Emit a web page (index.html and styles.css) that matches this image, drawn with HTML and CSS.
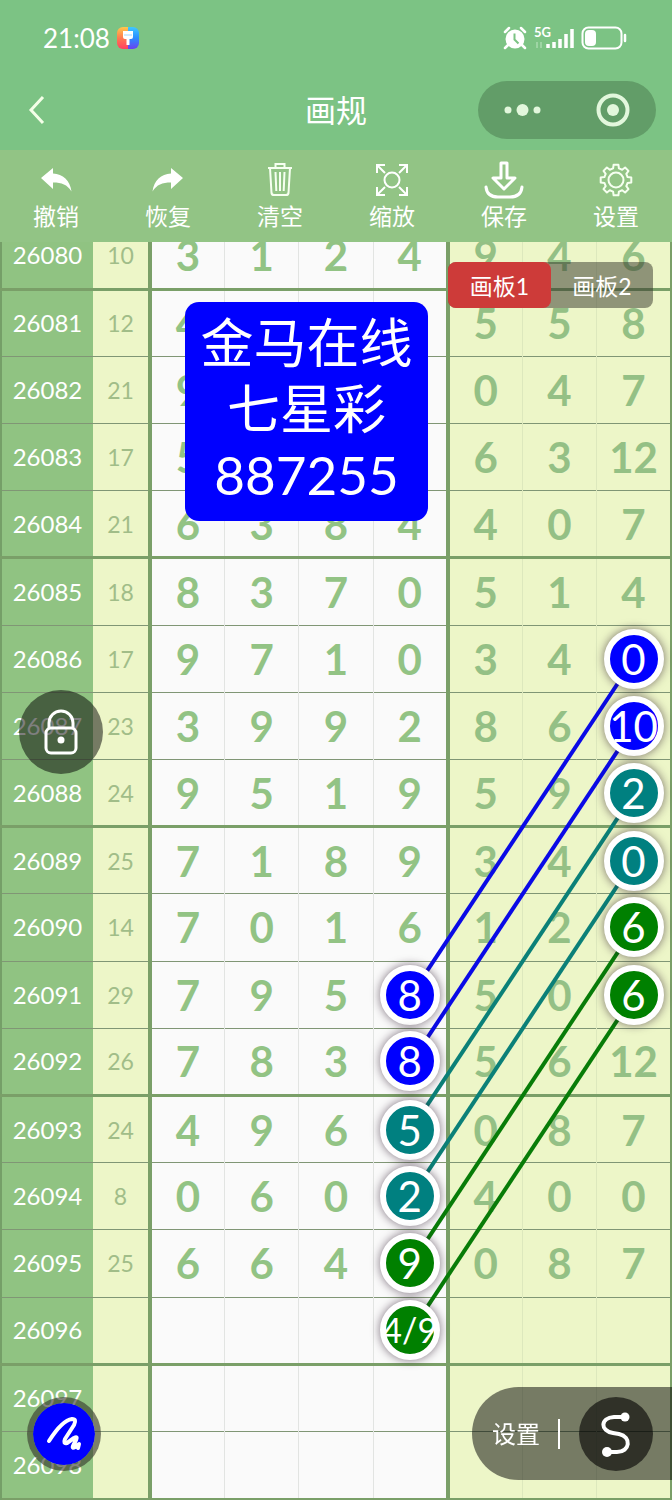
FILE: index.html
```html
<!DOCTYPE html>
<html lang="zh-CN">
<head>
    <meta charset="UTF-8">
    <meta name="viewport" content="width=device-width, initial-scale=1.0">
    <title>画规</title>
    <link rel="stylesheet" href="styles.css">
</head>
<body>
    <header class="header">
        <div class="status-bar">
            <div class="status-left">
                <span class="time">21:08</span>
                <svg class="theme-icon" width="22" height="22" viewBox="0 0 22 22">
                    <defs>
                        <linearGradient id="warm" x1="0" y1="0" x2="0" y2="1">
                            <stop offset="0" stop-color="#ffc84a"/>
                            <stop offset="0.5" stop-color="#ff7a50"/>
                            <stop offset="1" stop-color="#ff3f62"/>
                        </linearGradient>
                        <linearGradient id="cool" x1="0" y1="0" x2="0" y2="1">
                            <stop offset="0" stop-color="#3fc8ff"/>
                            <stop offset="0.5" stop-color="#2b8cff"/>
                            <stop offset="1" stop-color="#6a40f0"/>
                        </linearGradient>
                    </defs>
                    <path d="M6 0h6v22H6a6 6 0 0 1-6-6V6a6 6 0 0 1 6-6z" fill="url(#warm)"/>
                    <path d="M11 0h5a6 6 0 0 1 6 6v10a6 6 0 0 1-6 6h-5z" fill="url(#cool)"/>
                    <path d="M6 4h10v6q0 2-2 2h-1.500v6h-3v-6H8q-2 0-2-2z" fill="#fff"/>
                    <path d="M7 8h8" stroke="#9fd8ff" stroke-width="1"/>
                </svg>
            </div>
            <div class="status-right">
                <svg width="24" height="24" viewBox="0 0 24 24">
                    <circle cx="12" cy="13" r="9.500" fill="#fff"/>
                    <path d="M2 6l4-4M22 6l-4-4M5 19l-3 3M19 19l3 3" stroke="#fff" stroke-width="2.500" stroke-linecap="round"/>
                    <path d="M11.500 7.500v6l4 4" fill="none" stroke="#7cc384" stroke-width="2"/>
                </svg>
                <div class="signal">
                    <span class="network">5G</span>
                    <svg width="40" height="24" viewBox="0 0 40 24">
                        <path d="M3 16v6M7 16v6" stroke="#a9dcae" stroke-width="1.500"/>
                        <path d="M14 18v4M20 16v6M26 13v9M32 8v14M38 3v19" stroke="#fff" stroke-width="3.500"/>
                    </svg>
                </div>
                <svg width="46" height="24" viewBox="0 0 46 24">
                    <rect x="1.500" y="1.500" width="39" height="21" rx="6" fill="none" stroke="#fff" stroke-width="2"/>
                    <rect x="4" y="4" width="11" height="16" rx="4" fill="#fff"/>
                    <path d="M44 9v6" stroke="#fff" stroke-width="2.500" stroke-linecap="round"/>
                </svg>
            </div>
        </div>
        <div class="nav-bar">
            <button class="back" aria-label="返回">
                <svg width="18" height="30" viewBox="0 0 18 30"><path d="M15 2L3 15l12 13" fill="none" stroke="#f4ffe8" stroke-width="3"/></svg>
            </button>
            <h1 class="title">画规</h1>
            <div class="capsule">
                <button aria-label="更多">
                    <svg width="38" height="14" viewBox="0 0 38 14" fill="#e2f7dc"><circle cx="4" cy="7" r="3.500"/><circle cx="18.500" cy="7" r="6"/><circle cx="33" cy="7" r="3.500"/></svg>
                </button>
                <button aria-label="关闭">
                    <svg width="34" height="34" viewBox="0 0 34 34"><circle cx="17" cy="17" r="14.500" fill="none" stroke="#e2f7dc" stroke-width="4"/><circle cx="17" cy="17" r="6" fill="#e2f7dc"/></svg>
                </button>
            </div>
        </div>
    </header>

    <nav class="toolbar">
        <button>
            <svg width="40" height="40" viewBox="0 0 40 40"><path d="M5 18L17 8v5.500c10 .5 17 7 18.500 18C31 24.500 26 22.500 17 22.500V29z" fill="#fff"/></svg>
            撤销
        </button>
        <button>
            <svg width="40" height="40" viewBox="0 0 40 40"><path d="M35 18L23 8v5.500c-10 .5-17 7-18.500 18C9 24.500 14 22.500 23 22.500V29z" fill="#fff"/></svg>
            恢复
        </button>
        <button>
            <svg width="40" height="40" viewBox="0 0 40 40" fill="none" stroke="#f6fff0" stroke-width="2"><path d="M8 8h24M15.500 8V4h9v4M10 8l1.500 25q.3 2 2.500 2h12q2.200 0 2.500-2L30 8M15.500 12l.8 19M20 12v19M24.500 12l-.8 19"/></svg>
            清空
        </button>
        <button>
            <svg width="40" height="40" viewBox="0 0 40 40" fill="none" stroke="#fff" stroke-width="2"><circle cx="20" cy="20" r="7.500"/><path d="M5 13V5h8M5 5l8 8M27 5h8v8M35 5l-8 8M5 27v8h8M5 35l8-8M35 27v8h-8M35 35l-8-8"/></svg>
            缩放
        </button>
        <button>
            <svg width="40" height="40" viewBox="0 0 40 40" fill="none" stroke="#fff" stroke-width="3" stroke-linejoin="round" stroke-linecap="round"><path d="M17 3h6v15h8L20 29 9 18h8zM2 27q1 10 12 10h12q11 0 12-10"/></svg>
            保存
        </button>
        <button>
            <svg id="gear" width="40" height="40" viewBox="0 0 40 40" fill="none" stroke="#f6fff0" stroke-width="2" stroke-linejoin="round"><path/><circle cx="20" cy="20" r="7.500"/></svg>
            设置
        </button>
    </nav>

    <main class="board">
        <div class="sheet">
            <table class="trend">
                <colgroup>
                    <col class="col-issue">
                    <col class="col-sum">
                    <col span="7">
                </colgroup>
                <tbody id="rows"></tbody>
            </table>
            <svg class="links" id="links" viewBox="0 0 672 1277" preserveAspectRatio="none"></svg>
        </div>
        <div class="note">金马在线<br>七星彩<br>887255</div>
        <div class="tabs">
            <button class="tab active">画板1</button>
            <button class="tab">画板2</button>
        </div>
    </main>

    <button class="lock" aria-label="锁定">
        <svg width="34" height="46" viewBox="0 0 34 46" fill="none" stroke="#fff" stroke-width="3">
            <rect x="2" y="19" width="30" height="25" rx="5"/>
            <path d="M5 19v-5a12 12 0 0 1 24 0v5"/>
            <circle cx="17" cy="31" r="3.500" fill="#fff" stroke="none"/>
        </svg>
    </button>

    <button class="brush" aria-label="画笔">
        <svg width="38" height="38" viewBox="0 0 38 38" fill="none" stroke="#fff" stroke-width="4" stroke-linecap="round" stroke-linejoin="round">
            <path d="M4 26C11 15 20 5 27 4q5 0 2 6l-9 14q-2 5 2 4l7-5q4-2 2 2l-3 6q-1 3 2 1l4-3-1 4"/>
        </svg>
    </button>

    <div class="panel">
        <button class="panel-text">设置</button>
        <button class="curve" aria-label="曲线">
            <svg width="34" height="48" viewBox="0 0 34 48">
                <path d="M26 7H15C1 8 1 21 14 23l6 1c13 3 11 18-2 18H8" fill="none" stroke="#fff" stroke-width="4"/>
                <circle cx="26" cy="7" r="4.500" fill="#fff"/>
                <circle cx="8" cy="42" r="5" fill="#fff"/>
            </svg>
        </button>
    </div>

    <script>
        // 期号, 和值, 号码
        const rows = [
            [26080, 10, [3, 1, 2, 4, 9, 4, 6]],
            [26081, 12, [4, '', '', '', 5, 5, 8]],
            [26082, 21, [9, '', '', '', 0, 4, 7]],
            [26083, 17, [5, '', '', '', 6, 3, 12]],
            [26084, 21, [6, 3, 8, 4, 4, 0, 7]],
            [26085, 18, [8, 3, 7, 0, 5, 1, 4]],
            [26086, 17, [9, 7, 1, 0, 3, 4, 0]],
            [26087, 23, [3, 9, 9, 2, 8, 6, 10]],
            [26088, 24, [9, 5, 1, 9, 5, 9, 2]],
            [26089, 25, [7, 1, 8, 9, 3, 4, 0]],
            [26090, 14, [7, 0, 1, 6, 1, 2, 6]],
            [26091, 29, [7, 9, 5, 8, 5, 0, 6]],
            [26092, 26, [7, 8, 3, 8, 5, 6, 12]],
            [26093, 24, [4, 9, 6, 5, 0, 8, 7]],
            [26094, 8, [0, 6, 0, 2, 4, 0, 0]],
            [26095, 25, [6, 6, 4, 9, 0, 8, 7]],
            [26096, '', ['', '', '', '4/9', '', '', '']],
            [26097, '', ['', '', '', '', '', '', '']],
            [26098, '', ['', '', '', '', '', '', '']]
        ];

        // 连线: 第7位的期号 -> 第4位的期号
        const links = [
            { from: 26086, to: 26091, color: 'blue' },
            { from: 26087, to: 26092, color: 'blue' },
            { from: 26088, to: 26093, color: 'teal' },
            { from: 26089, to: 26094, color: 'teal' },
            { from: 26090, to: 26095, color: 'green' },
            { from: 26091, to: 26096, color: 'green' }
        ];

        const balls = {};
        links.forEach(l => {
            balls[l.from + '-6'] = l.color;
            balls[l.to + '-3'] = l.color;
        });

        document.getElementById('rows').innerHTML = rows.map(([issue, sum, nums]) => {
            const cells = nums.map((n, i) => {
                const color = balls[issue + '-' + i];
                const small = String(n).length > 2 ? ' small' : '';
                const text = color ? `<span class="ball ${color}${small}">${n}</span>` : n;
                return `<td class="${i < 4 ? 'front' : 'back-area'}">${text}</td>`;
            }).join('');
            return `<tr><th scope="row">${issue}</th><td class="sum">${sum}</td>${cells}</tr>`;
        }).join('');

        const rowY = issue => 33.6 + (issue - 26080) * 67.2;
        document.getElementById('links').innerHTML = links.map(l =>
            `<line class="${l.color}" x1="634" y1="${rowY(l.from)}" x2="411" y2="${rowY(l.to)}"/>`
        ).join('');

        // 齿轮轮廓, 8个齿
        let d = '';
        for (let i = 0; i < 8; i++) {
            [[-14, 12], [-9, 15.5], [9, 15.5], [14, 12]].forEach(([a, r]) => {
                const t = (i * 45 + a) * Math.PI / 180;
                const x = 20 + Math.sin(t) * r;
                const y = 20 - Math.cos(t) * r;
                d += (d ? 'L' : 'M') + x.toFixed(1) + ' ' + y.toFixed(1);
            });
        }
        document.querySelector('#gear path').setAttribute('d', d + 'z');
    </script>
</body>
</html>
```

FILE: styles.css
```css
* {
    box-sizing: border-box;
}

body {
    margin: 0;
    min-height: 100vh;
    background: #fafafa;
    font-family: Lato, "Noto Sans CJK SC", sans-serif;
    color: #fff;
    overflow-x: hidden;
}

button {
    padding: 0;
    border: 0;
    background: none;
    color: inherit;
    font: inherit;
    cursor: pointer;
}

svg {
    display: block;
}

/* 顶部 */
.header {
    padding-bottom: 6px;
    background: #7cc384;
}

.status-bar {
    display: flex;
    justify-content: space-between;
    align-items: center;
    height: 76px;
    padding: 0 45px 0 43px;
}

.status-left,
.status-right {
    display: flex;
    align-items: center;
    gap: 7px;
}

.time {
    font-size: 26px;
}

.signal {
    position: relative;
}

.network {
    position: absolute;
    left: 0;
    top: 0;
    font-size: 13px;
    font-weight: 700;
    line-height: 13px;
}

.nav-bar {
    display: grid;
    grid-template-columns: 1fr auto 1fr;
    align-items: center;
    height: 68px;
    padding: 0 16px 0 28px;
}

.title {
    margin: 0;
    padding-right: 12px;
    font-size: 31px;
    font-weight: 400;
    line-height: 40px;
}

.back {
    justify-self: start;
}

.capsule {
    justify-self: end;
    display: flex;
    justify-content: space-between;
    align-items: center;
    width: 178px;
    height: 58px;
    padding: 0 26px;
    border-radius: 29px;
    background: #629d68;
}

/* 工具栏 */
.toolbar {
    position: relative;
    z-index: 5;
    display: grid;
    grid-template-columns: repeat(6, 1fr);
    height: 92px;
    padding-top: 10px;
    background: #92c485;
}

.toolbar button {
    display: flex;
    flex-direction: column;
    align-items: center;
    font-size: 23px;
    line-height: 32px;
}

/* 走势表 */
.board {
    display: flow-root;
    position: relative;
}

.sheet {
    position: relative;
    margin-top: -20px;
}

.trend {
    width: 100%;
    table-layout: fixed;
    border-collapse: collapse;
    text-align: center;
}

.col-issue {
    width: 92px;
}

.col-sum {
    width: 57px;
}

.trend tr {
    height: 10vw;
    border-bottom: 1px solid #809675;
}

.trend tr:nth-child(4n+1) {
    border-bottom: 3px solid #7a9f68;
}

.trend tr:last-child {
    border-bottom: 2px solid #7a9f68;
}

.trend th,
.trend td {
    padding: 0;
    line-height: 48px;
}

.trend th {
    border-left: 2px solid #759f68;
    background: #90c382;
    font-size: 24px;
    font-weight: 400;
}

.trend .sum {
    border-right: 4px solid #7a9f68;
    background: #edf6c8;
    color: #a1bd88;
    font-size: 23px;
}

.front,
.back-area {
    border-right: 1px solid #e2e4e2;
    background: #fafafa;
    color: #92c384;
    font-size: 42px;
    font-weight: 700;
}

.back-area {
    border-right-color: #dde8bd;
    background: #edf6c8;
    color: #94c085;
}

.trend td:nth-child(6) {
    border-right: 4px solid #7a9f68;
}

.trend td:last-child {
    border-right: 2px solid #7a9f68;
}

.links {
    position: absolute;
    inset: 0;
    width: 100%;
    height: 100%;
}

.links line {
    stroke-width: 4;
}

.links .blue { stroke: #0a0ae6; }
.links .teal { stroke: #0b8078; }
.links .green { stroke: #087c08; }

.ball {
    position: relative;
    z-index: 2;
    display: flex;
    align-items: center;
    justify-content: center;
    width: 60px;
    height: 60px;
    margin: 0 auto;
    border: 6px solid #fff;
    border-radius: 50%;
    box-shadow: 0 0 10px rgba(40, 20, 40, 0.6);
    color: #fff;
    font-weight: 400;
    white-space: nowrap;
}

.ball.blue { background: #0000ff; }
.ball.teal { background: #008080; }
.ball.green { background: #008000; }

.ball.small {
    font-size: 34px;
}

/* 浮层 */
.note {
    position: absolute;
    left: 185px;
    top: 60px;
    z-index: 3;
    width: 243px;
    padding: 8px 0 13px;
    border-radius: 14px;
    background: #0000ff;
    font-size: 53px;
    line-height: 66px;
    text-align: center;
}

.tabs {
    position: absolute;
    top: 20px;
    right: 19px;
    z-index: 3;
    display: flex;
    border-radius: 8px;
    background: rgba(50, 50, 40, 0.5);
}

.tab {
    width: 102px;
    height: 46px;
    border-radius: 8px;
    font-size: 23px;
}

.tab.active {
    width: 103px;
    background: #cd3b39;
}

.lock {
    position: fixed;
    left: 19px;
    top: 690px;
    z-index: 4;
    display: grid;
    place-items: center;
    width: 84px;
    height: 84px;
    border-radius: 50%;
    background: rgba(0, 0, 0, 0.5);
}

.brush {
    position: fixed;
    left: 27px;
    bottom: 29px;
    z-index: 4;
    display: grid;
    place-items: center;
    width: 74px;
    height: 74px;
    border: 6px solid rgba(50, 50, 40, 0.6);
    border-radius: 50%;
    background: #0000ff;
    background-clip: padding-box;
}

.panel {
    position: fixed;
    right: 0;
    bottom: 20px;
    z-index: 4;
    display: flex;
    align-items: center;
    width: 200px;
    height: 93px;
    padding-left: 20px;
    border-radius: 47px 0 0 47px;
    background: rgba(0, 0, 0, 0.5);
}

.panel-text {
    width: 68px;
    height: 30px;
    border-right: 2px solid #fff;
    font-size: 24px;
    line-height: 28px;
    text-align: left;
}

.curve {
    display: grid;
    place-items: center;
    width: 74px;
    height: 74px;
    margin-left: 19px;
    border-radius: 50%;
    background: rgba(0, 0, 0, 0.6);
}
```
